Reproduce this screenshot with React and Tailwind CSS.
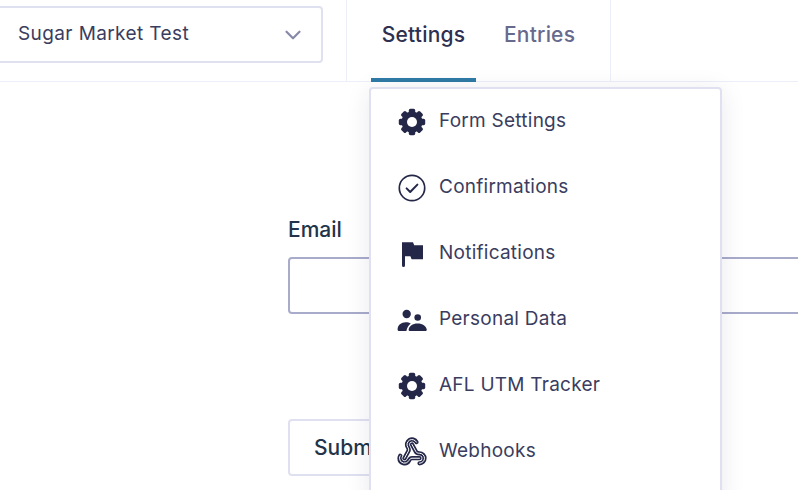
import { ChevronDown } from 'lucide-react'

function Gear() {
  const teeth = [0, 45, 90, 135, 180, 225, 270, 315]
  return (
    <svg width="28" height="28" viewBox="0 0 28 28" className="shrink-0">
      <circle cx="14" cy="14" r="10.5" fill="#242748" />
      {teeth.map(a => (
        <rect key={a} x="10.8" y="0.8" width="6.4" height="6" rx="1.6" fill="#242748" transform={`rotate(${a} 14 14)`} />
      ))}
      <circle cx="14" cy="14" r="5" fill="#fff" />
    </svg>
  )
}

function CircleCheck() {
  return (
    <svg width="28" height="28" viewBox="0 0 28 28" fill="none" stroke="#242748" className="shrink-0">
      <circle cx="14" cy="14" r="12.7" strokeWidth="1.7" />
      <path d="M8.6 14.4l3.6 3.6 7.2-7.4" strokeWidth="2" strokeLinecap="round" strokeLinejoin="round" />
    </svg>
  )
}

function Flag() {
  return (
    <svg width="28" height="28" viewBox="0 0 28 28" className="shrink-0">
      <path d="M4 2.200h11l1.200 3H25v14H13.600l-1.200-3H7v9.400a1.500 1.500 0 0 1-3 0z" fill="#242748" />
    </svg>
  )
}

function People() {
  return (
    <svg width="30" height="28" viewBox="0 0 30 28" fill="#242748" className="shrink-0">
      <circle cx="9.700" cy="8" r="4.200" />
      <circle cx="20.700" cy="11.500" r="3.300" />
      <path d="M0.600 23.600c0-4.600 3.600-7.400 8.200-7.400 2 0 3.500 .4 5 1.200-2.400 1.800-3.800 4.200-4.400 7.600H1.600c-.6 0-1-.6-1-1.400z" />
      <path d="M11.600 23.800c.4-3.800 4-6.400 9-6.400s8.800 2.600 9.200 6.400c.1.700-.4 1.200-1 1.200H12.600c-.6 0-1.100-.5-1-1.200z" />
    </svg>
  )
}

const hookPath = 'M18 16.980h-5.990c-1.100 0-1.950.940-2.480 1.900A4 4 0 0 1 2 17c.010-.700.200-1.400.570-2M6 17l3.130-5.780c.530-.970.100-2.180-.500-3.100a4 4 0 1 1 6.890-4.060M12 6l3.130 5.730C15.660 12.700 16.900 13 18 13a4 4 0 0 1 0 8'

// doubled stroke gives the hollow chain look of the original
function Hook() {
  return (
    <svg width="30" height="30" viewBox="0 0 24 24" fill="none" strokeLinecap="round" strokeLinejoin="round" className="shrink-0">
      <path d={hookPath} stroke="#242748" strokeWidth="3.400" />
      <path d={hookPath} stroke="#fff" strokeWidth="0.800" />
    </svg>
  )
}

const menuItems = [
  { label: 'Form Settings', icon: <Gear /> },
  { label: 'Confirmations', icon: <CircleCheck /> },
  { label: 'Notifications', icon: <Flag /> },
  { label: 'Personal Data', icon: <People /> },
  { label: 'AFL UTM Tracker', icon: <Gear /> },
  { label: 'Webhooks', icon: <Hook /> },
]

export default function App() {
  return (
    <div className="relative h-[490px] w-[798px] overflow-hidden bg-white font-['Inter',sans-serif]">
      {/* Top bar */}
      <header className="flex h-[82px] items-stretch border-b border-[#eceef8]">
        <div className="flex w-[347px] shrink-0 items-start border-r border-[#eceef8] pt-[6px]">
          <div className="-ml-[10px] flex h-[57px] w-[333px] items-center justify-between rounded-[4px] border-2 border-[#dfe0f0] pr-[15px] pl-[26px] text-[19px] tracking-[0.4px] text-[#3a3d5e]">
            <span>Sugar Market Test</span>
            <ChevronDown size={26} color="#8689a8" strokeWidth={2} />
          </div>
        </div>
        <nav className="flex w-[264px] shrink-0 items-stretch border-r border-[#eceef8] pl-[24px] text-[21px] font-medium tracking-[0.2px]">
          <div className="-mb-px flex h-[82px] w-[105px] justify-center border-b-[4px] border-[#2f7aa6] pt-[19px] text-[#2d3050]">Settings</div>
          <div className="pt-[19px] pl-[28px] text-[#676a8c]">Entries</div>
        </nav>
      </header>

      {/* Form */}
      <main className="pt-[134px] pl-[288px]">
        <label className="block text-[21px] leading-[28px] font-medium text-[#23344a]">Email</label>
        <div className="mt-[13px] -mr-[20px] h-[57px] rounded-[4px] border-2 border-[#a9abcb]" />
        <button className="mt-[105px] flex h-[57px] w-[160px] items-center rounded-[4px] border-2 border-[#dfe0f0] pl-[24px] text-[21px] font-medium text-[#23344a]">
          Submit
        </button>
      </main>

      {/* Settings menu */}
      <div className="absolute top-[87px] left-[369px] h-[420px] w-[353px] rounded-[4px] border-2 border-[#dfe0f0] bg-white shadow-[0_4px_24px_rgba(40,44,90,0.1)]">
        {menuItems.map(item => (
          <div key={item.label} className="flex h-[66px] items-center pl-[26px] text-[19px] tracking-[0.25px] text-[#3a3d5e]">
            <span className="flex w-[30px] justify-center">{item.icon}</span>
            <span className="ml-[12px] -translate-y-px">{item.label}</span>
          </div>
        ))}
      </div>
    </div>
  )
}
